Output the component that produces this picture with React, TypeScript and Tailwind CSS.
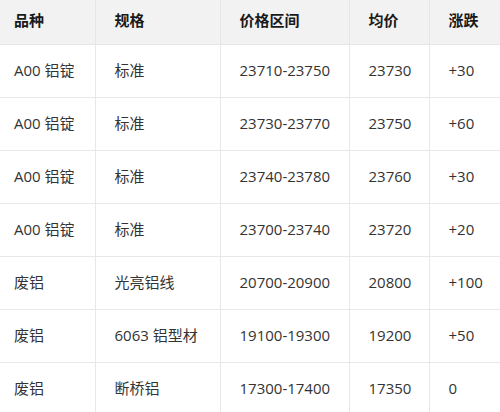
const rows = [
  ["A00 铝锭", "标准", "23710-23750", "23730", "+30"],
  ["A00 铝锭", "标准", "23730-23770", "23750", "+60"],
  ["A00 铝锭", "标准", "23740-23780", "23760", "+30"],
  ["A00 铝锭", "标准", "23700-23740", "23720", "+20"],
  ["废铝", "光亮铝线", "20700-20900", "20800", "+100"],
  ["废铝", "6063 铝型材", "19100-19300", "19200", "+50"],
  ["废铝", "断桥铝", "17300-17400", "17350", "0"],
];

const heads = ["品种", "规格", "价格区间", "均价", "涨跌"];

export default function App() {
  return (
    <div className="w-[500px] h-[412px] overflow-hidden bg-white font-['Open_Sans','Noto_Sans_CJK_SC',sans-serif] text-[15px]">
      <table className="w-[500px] table-fixed border-collapse">
        <colgroup>
          <col className="w-[95px]" />
          <col className="w-[125px]" />
          <col className="w-[129px]" />
          <col className="w-[80px]" />
          <col className="w-[71px]" />
        </colgroup>
        <thead>
          <tr className="h-[44px] bg-[#f2f2f2] border-b border-[#e6e6e6]">
            {heads.map((h, i) => (
              <th
                key={h}
                className={`text-left font-bold text-[#1a1a1a] pb-[3px] ${i > 0 ? "pl-[19px] border-l border-[#e6e6e6]" : "pl-[14px]"}`}
              >
                {h}
              </th>
            ))}
          </tr>
        </thead>
        <tbody>
          {rows.map((r, ri) => (
            <tr key={ri} className="h-[53px] border-b border-[#e8e8e8]">
              {r.map((c, i) => (
                <td
                  key={i}
                  className={`text-[#333333] whitespace-nowrap ${i > 0 ? "pl-[19px] border-l border-[#e8e8e8]" : "pl-[14px]"}`}
                >
                  {c}
                </td>
              ))}
            </tr>
          ))}
        </tbody>
      </table>
    </div>
  );
}
